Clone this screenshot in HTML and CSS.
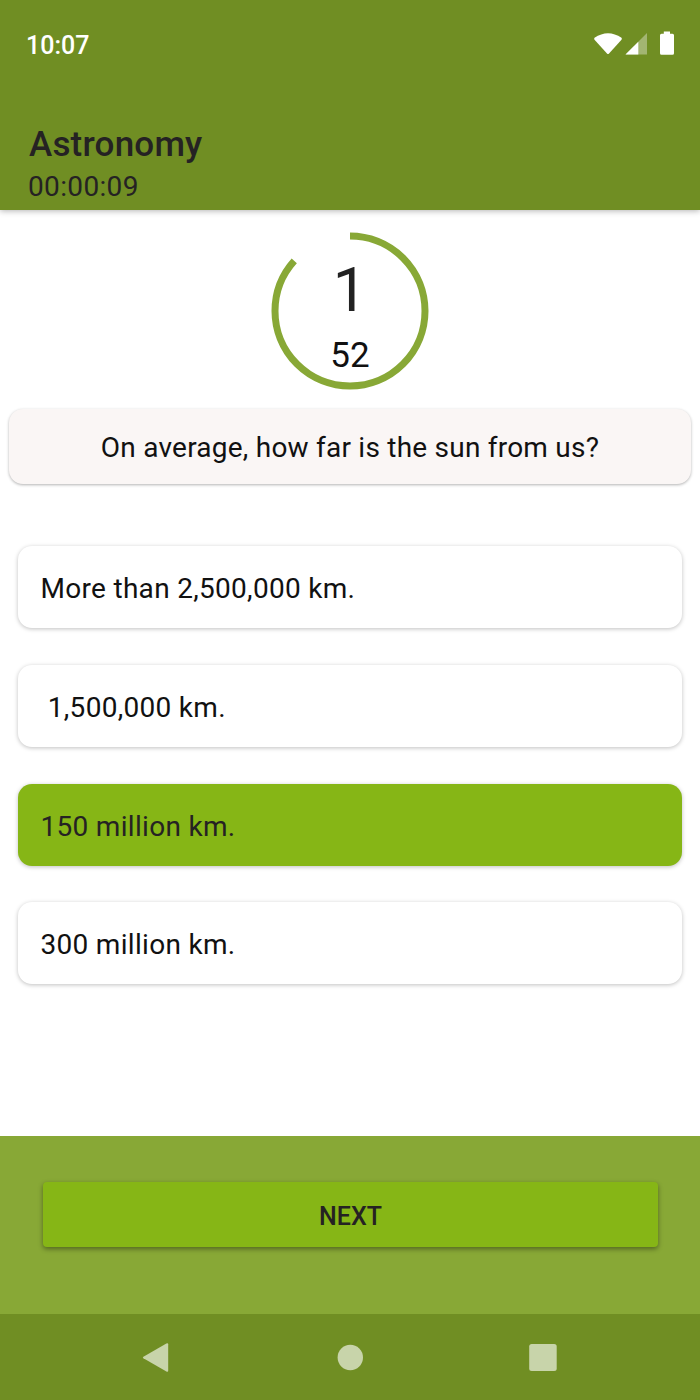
FILE: index.html
```html
<!DOCTYPE html>
<html lang="en">
<head>
    <meta charset="UTF-8">
    <meta name="viewport" content="width=device-width, initial-scale=1.0">
    <title>Astronomy</title>
    <link rel="stylesheet" href="styles.css">
</head>
<body>
    <div class="header">
        <div class="status-bar">
            <div class="clock">10:07</div>
            <svg class="status-icons" viewBox="0 0 82 26" width="82" height="26">
                <path d="M0.5 5.8 Q14 -3.5 27.5 5.8 Q28.2 6.8 27.5 7.7 L14.8 21.7 Q14 22.5 13.2 21.7 L0.5 7.7 Q-0.2 6.8 0.5 5.8 Z" fill="#ffffff"/>
                <path d="M53 1 V22.5 H31.5 Z" fill="#a2b572"/>
                <path d="M44.3 9.7 V22.5 H31.5 Z" fill="#ffffff"/>
                <path d="M69.8 -0.5 h6.2 v2.3 h2.5 q1.5 0 1.5 1.5 v18 q0 1.5 -1.5 1.5 h-11 q-1.5 0 -1.5 -1.5 v-18 q0 -1.5 1.5 -1.5 h2.3 Z" fill="#ffffff"/>
            </svg>
        </div>
        <div class="title">Astronomy</div>
        <div class="timer">00:00:09</div>
    </div>

    <div class="content">
        <div class="progress">
            <svg class="ring" viewBox="0 0 158 158">
                <circle cx="79" cy="79" r="75" pathLength="60" stroke-dasharray="52 8" transform="rotate(-90 79 79)"/>
            </svg>
            <div class="counter">
                <div class="question-number">1</div>
                <div class="seconds">52</div>
            </div>
        </div>

        <div class="question">On average, how far is the sun from us?</div>

        <div class="answers">
            <button class="answer">More than 2,500,000 km.</button>
            <button class="answer">&nbsp;1,500,000 km.</button>
            <button class="answer selected">150 million km.</button>
            <button class="answer">300 million km.</button>
        </div>
    </div>

    <div class="footer">
        <button class="next-button">NEXT</button>
    </div>

    <div class="nav-bar">
        <svg viewBox="0 0 30 30" class="icon">
            <path d="M1.4 14.7 L24.4 1.4 Q26.2 0.7 26.2 2.2 V28.8 Q26.2 30.3 24.4 29.6 L1.4 16.3 Q0.2 15.5 1.4 14.7 Z"/>
        </svg>
        <svg viewBox="0 0 30 30" class="icon">
            <circle cx="15.3" cy="15.5" r="12.7"/>
        </svg>
        <svg viewBox="0 0 30 30" class="icon">
            <rect x="1.2" y="2" width="27.5" height="27" rx="2.5"/>
        </svg>
    </div>
</body>
</html>
```

FILE: styles.css
```css
html, body {
    height: 100%;
    margin: 0;
    font-family: Roboto, sans-serif;
    background-color: #ffffff;
    color: #111111;
    overflow: hidden;
}
body {
    display: flex;
    flex-direction: column;
}
button {
    font-family: inherit;
    border: none;
    cursor: pointer;
}
.header {
    height: 210px;
    box-sizing: border-box;
    background-color: #708e23;
    box-shadow: 0 1px 6px rgba(0, 0, 0, 0.3);
    color: #252223;
}
.status-bar {
    display: flex;
    align-items: center;
    justify-content: space-between;
    height: 90px;
    padding: 0 24px 0 26px;
    color: #ffffff;
}
.status-icons {
    overflow: visible;
}
.clock {
    font-size: 25px;
    font-weight: 500;
}
.title {
    margin: 34px 29px 0;
    font-size: 35px;
    line-height: 42px;
    font-weight: 500;
    letter-spacing: 0.2px;
}
.timer {
    margin: 0 28px;
    font-size: 28px;
    line-height: 42px;
    letter-spacing: 0.35px;
}
.content {
    flex: 1;
    padding: 21.5px 9px 0;
}
.progress {
    display: grid;
    justify-content: center;
    height: 158px;
}
.ring, .counter {
    grid-area: 1 / 1;
    width: 158px;
    height: 158px;
}
.ring circle {
    fill: none;
    stroke: #88a836;
    stroke-width: 7;
}
.counter {
    display: flex;
    flex-direction: column;
    align-items: center;
    padding-top: 22px;
    box-sizing: border-box;
    color: #222222;
}
.question-number {
    font-size: 61px;
    line-height: 73px;
}
.seconds {
    font-size: 35px;
    line-height: 58px;
    color: #111111;
}
.question {
    margin-top: 19px;
    height: 75px;
    border-radius: 14px;
    background-color: #faf6f5;
    box-shadow: 0 1px 3px rgba(0, 0, 0, 0.3);
    font-size: 28px;
    letter-spacing: 0.23px;
    line-height: 77px;
    text-align: center;
}
.answers {
    display: flex;
    flex-direction: column;
    gap: 36.7px;
    margin: 62.7px 9px 0;
}
.answer {
    height: 82px;
    padding: 3px 22.5px 0;
    border-radius: 14px;
    background-color: #ffffff;
    box-shadow: 0 1px 4px rgba(0, 0, 0, 0.25);
    color: #111111;
    font-size: 28px;
    letter-spacing: 0.3px;
    text-align: left;
}
.selected {
    background-color: #86b616;
    color: #252223;
}
.footer {
    height: 178px;
    padding: 46px 42px 0 43px;
    box-sizing: border-box;
    background-color: #88a836;
}
.next-button {
    width: 100%;
    height: 65px;
    padding-top: 4px;
    border-radius: 4px;
    background-color: #86b616;
    box-shadow: 0 2px 5px rgba(0, 0, 0, 0.4);
    color: #252223;
    font-size: 25px;
    font-weight: 500;
}
.nav-bar {
    display: flex;
    align-items: center;
    justify-content: center;
    gap: 163px;
    height: 86px;
    background-color: #708e23;
}
.icon {
    width: 30px;
    height: 30px;
    fill: #c8d4aa;
    overflow: visible;
}
```
